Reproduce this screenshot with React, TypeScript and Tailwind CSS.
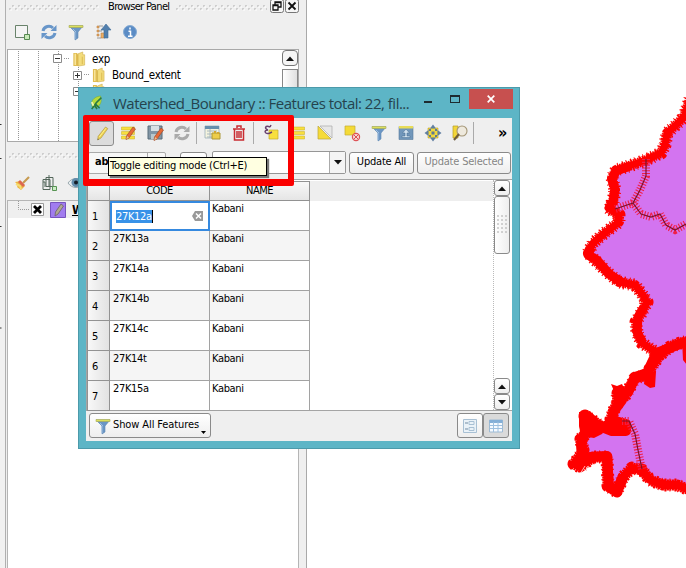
import type { ReactNode } from 'react';

const Icon = ({ children, className = '' }: { children: ReactNode; className?: string }) => (
  <svg viewBox="0 0 18 18" className={'h-[18px] w-[18px] shrink-0 ' + className} fill="none">{children}</svg>
);

const Funnel = () => (
  <Icon>
    <path d="M2 3h14l-5 6v6l-3 2V9z" fill="#6b96c5" stroke="#5c86b2" strokeWidth=".6" />
    <path d="M8 9v7M6 6l3 3" stroke="#9fc0e2" />
    <path d="M2 2.5h14v2H2z" fill="#dce05c" stroke="#a5a755" strokeWidth=".6" />
  </Icon>
);
const Pencil = () => (
  <>
    <path d="M12.5 3l2.3 1.6L8 14l-3.3 2 .5-3.8z" fill="#ecd04d" stroke="#b39c4a" strokeWidth=".7" />
    <path d="M13 4.2L6.4 13" stroke="#fff08c" /><path d="M4.5 16l1.4-.7-1-.8z" fill="#555" />
  </>
);
const RedPencil = () => (
  <><path d="M14 3l2.5 2-6.5 9-3 1.5.5-3.5z" fill="#e86a37" stroke="#9f4c2c" strokeWidth=".7" /><path d="M8 12l2 1.6-2.6 1.6z" fill="#e8c496" /></>
);
const Lines = () => (
  <g stroke="#c7ad27" strokeWidth=".5" fill="#f8df3e"><path d="M2.5 3h13v3h-13zM2.5 7.5h13v3h-13zM2.5 12h13v3h-13z" /></g>
);
const Refresh = ({ color }: { color: string }) => (
  <g stroke={color} strokeWidth="3">
    <path d="M3 8c1-5 7-6 10-3" /><path d="M15 10c-1 5-7 6-10 3" />
    <path d="M10.5 8H16.5V2zM7.5 10H1.5v6z" fill={color} stroke="none" />
  </g>
);
const Folder = ({ small = false }: { small?: boolean }) => (
  <svg viewBox="0 0 14 17" className={small ? 'h-4 w-[13px]' : 'h-4 w-3.5'}>
    <path d="M1 2h4l1 2h1v12H1z" fill="#e1bd52" /><path d="M6 3l5-2v3h2v11l-7 1z" fill="#f3dc7b" stroke="#cdab46" strokeWidth=".6" /><path d="M3 3v12" stroke="#fae9a0" strokeWidth="1.5" /><path d="M10.5 6v8" stroke="#d9b850" />
  </svg>
);
const Arrow = ({ down = false }: { down?: boolean }) => (
  <svg viewBox="0 0 8 5" className="h-[5px] w-2"><path d={down ? 'M0 0h8L4 4.5z' : 'M0 5h8L4 .5z'} fill="#111" /></svg>
);
const Plus = ({ open = false }: { open?: boolean }) => (
  <svg viewBox="0 0 9 9" className="h-[9px] w-[9px] shrink-0"><path d="M.5.5h8v8h-8z" fill="#fff" stroke="#8b8b8b" /><path d={open ? 'M2 4.5h5' : 'M2 4.5h5M4.5 2v5'} stroke="#333" /></svg>
);
const Grip = ({ width }: { width: number }) => (
  <svg width={width} height="6" className="shrink-0">
    <defs><pattern id={'grip' + width} width="6" height="6" patternUnits="userSpaceOnUse"><path d="M0 4h2M3 1h2" stroke="#c4c4c4" strokeWidth="1.4" /><path d="M1 5h2M4 2h2" stroke="#fff" /></pattern></defs>
    <rect width={width} height="6" fill={'url(#grip' + width + ')'} />
  </svg>
);
const Sep = () => <div className="h-[22px] w-px shrink-0 bg-[#aaa]" />;

const AddLayer = () => <Icon><path d="M2.5 2.5h12v12h-12z" stroke="#69836b" fill="#f4f4f4" /><path d="M11.5 11.5h5v5h-5z" fill="#c8eab9" stroke="#568951" /></Icon>;

function BrowserPanel() {
  return (
    <section className="flex h-[142px] flex-col pl-px">
      <div className="flex h-[15px] items-center">
        <div className="ml-[2px] w-[99px]"><Grip width={90} /></div>
        <span className="w-[68px] text-[11px] tracking-[-0.65px] whitespace-nowrap">Browser Panel</span>
        <Grip width={91} />
        <div className="ml-[3px] flex gap-[1px] pb-[3px]">
          <svg viewBox="0 0 14 14" className="h-3.5 w-3.5"><rect x=".5" y=".5" width="13" height="13" rx="2" fill="#f6f6f6" stroke="#777" /><path d="M5 6V3h6v5H8M3 6h5v5H3zM5 3.5h6M3 6.5h5" fill="none" stroke="#111" strokeWidth="1.3" /></svg>
          <svg viewBox="0 0 14 14" className="h-3.5 w-3.5"><rect x=".5" y=".5" width="13" height="13" rx="2" fill="#f6f6f6" stroke="#777" /><path d="M3.5 3.5l7 7m0-7l-7 7" stroke="#111" strokeWidth="1.8" /></svg>
        </div>
      </div>
      <div className="flex h-[34px] items-center gap-[9px] pl-[6px]">
        <AddLayer />
        <Icon><Refresh color="#6896c9" /></Icon>
        <Funnel />
        <Icon><path d="M3 3h2v2H3zM3 7h2v2H3zM3 11h2v2H3zM7 10h4v5H7z" fill="#edae63" stroke="#b98047" strokeWidth=".6" /><path d="M5 3h4M5 8h3M3 15h4" stroke="#999" /><path d="M12 1l5 6h-3v8h-4V7H7z" fill="#527fad" stroke="#3e6c98" strokeWidth=".6" /></Icon>
        <Icon><circle cx="9" cy="9" r="6.5" fill="#5b8cc5" stroke="#87acd4" strokeWidth="1" /><path d="M9 4.5v2M7.5 8.2H9.5V13M7 13.2h4.5" stroke="#fff" strokeWidth="1.5" /></Icon>
      </div>
      <div className="relative h-[93px] w-[292px] border border-[#a9a9a9] bg-white text-[11.5px] tracking-[-0.25px]">
        <svg className="absolute inset-0 h-full w-full" fill="none"><path d="M10.5 1v92M30.5 1v92M50.5 1v3M50.5 12v80M70.5 15v40M56 8.5h6M76 24.5h6" stroke="#969696" strokeDasharray="1 1" /></svg>
        <div className="relative flex h-[17px] items-center pl-[45px]"><Plus open /><div className="ml-[10px]"><Folder /></div><span className="ml-[6px] pt-[2px]">exp</span></div>
        <div className="relative flex h-[16px] items-center pl-[65px]"><Plus /><div className="ml-[10px]"><Folder small /></div><span className="ml-[7px] pt-[2px]">Bound_extent</span></div>
        <div className="relative flex h-[16px] items-center pl-[65px]"><Plus open /><div className="ml-[10px]"><Folder small /></div></div>
        <div className="absolute top-0 right-0 flex h-[91px] w-4 flex-col gap-[3px]">
          <div className="flex h-4 shrink-0 items-center justify-center rounded-sm border border-[#777] bg-[#f5f5f5]"><Arrow /></div>
          <div className="flex-1 border border-[#888] bg-gradient-to-r from-white to-[#e0e0e0]" />
        </div>
      </div>
    </section>
  );
}

function LayersPanel() {
  return (
    <section className="flex min-h-0 flex-1 flex-col pl-px">
      <div className="flex h-[27px] items-center pl-[2px]"><Grip width={290} /></div>
      <div className="flex h-[31px] items-center gap-[9px] pb-[3px] pl-[6px]">
        <Icon><path d="M16 3L10 9" stroke="#c79b51" strokeWidth="2.2" /><path d="M2 8l6-1 4 5-4 4-4-3 1-2z" fill="#edb640" /><path d="M7 6l5 5-2 2-5-5z" fill="#dc6750" /><path d="M3 10l4 2 1 3" stroke="#f6dc74" strokeWidth="2" /></Icon>
        <Icon><path d="M3 5.5h7v10H3zM6 3.5h7v9H6zM9 1v12M3 8h2v5" stroke="#53665a" /><path d="M12.5 12.5h4v4h-4z" fill="#ccebc6" stroke="#579453" /></Icon>
        <Icon><path d="M1 9c4-6 12-6 16 0-4 6-12 6-16 0z" fill="#e9eef0" stroke="#9aa9ae" /><circle cx="9" cy="8.5" r="4.5" fill="#648dac" /><circle cx="9" cy="8.5" r="2" fill="#151e27" /></Icon>
      </div>
      <div className="w-[292px] flex-1 border-x border-t border-[#b5b5b5] bg-white">
        <div className="flex h-[17px] items-center bg-[#efefef]">
          <svg className="h-full w-[23px] shrink-0" fill="none"><path d="M10.5 0v8.5H22" stroke="#999" strokeDasharray="1 1" /></svg>
          <svg className="h-[13px] w-[13px]" viewBox="0 0 13 13"><path d="M.5.5h12v12H.5z" fill="#fff" stroke="#999" /><path d="M3 3l7 7m0-7l-7 7" stroke="#000" strokeWidth="2.8" /></svg>
          <svg className="ml-[6px] h-4 w-4" viewBox="0 0 16 16"><path d="M.5.5h15v15H.5z" fill="#a17cef" stroke="#7754bd" /><path d="M11 2l2.5 2L8 12l-3 2 .5-4z" fill="#b1a990" stroke="#776d78" /></svg>
          <span className="ml-[6px] text-[12px] font-bold underline">Watershed</span>
        </div>
      </div>
    </section>
  );
}

function MapCanvas() {
  const upper = 'M690 99L684 117L675 126L667 133L665 145L661 153L646 160L629 166L616 170L612 178L615 190L613 202L608 208L619 215L619 222L606 232L593 243L588 253L597 262L607 272L619 282L635 285L642 294L647 302L642 312L636 322L637 333L642 343L657 353';
  const lower = 'M690 341L680 343L670 347L659 356L650 369L648 375L635 378L629 389L623 399L617 393L618 402L613 412L611 419L620 426L602 427L592 420L585 416L587 433L580 439L584 450L574 464L580 467L593 457L607 457L608 486L617 492L623 477L632 468L642 470L650 480L663 485L677 485L690 490';
  const seams = 'M646 159L646 176L640 190L633 203L615 209M633 203L641 214L651 217L660 214L666 225L675 230L686 224M622 421L629 421L635 434L638 450L642 469';
  return (
    <main className="min-w-0 flex-1 bg-white">
      <svg className="h-full w-full" viewBox="307 0 379 568" fill="none">
        <path d={upper + 'L700 345V90Z'} fill="#d374f0" /><path d={lower + 'L700 490V341Z'} fill="#d374f0" />
        <g stroke="#f00" strokeLinejoin="round">
          <path d={upper} strokeWidth="7" /><path d={upper} strokeWidth="10" strokeDasharray="1.6 .8" /><path d={upper} strokeWidth="13" strokeDasharray="1 2.7 1.4 3.9" />
          <path d={lower} strokeWidth="8" /><path d={lower} strokeWidth="11" strokeDasharray="2 .5" /><path d={lower} strokeWidth="13" strokeDasharray="2 3 1 4" />
          <path d="M630 166l-14 5-4 9 3 9-2 13-4 6M590 248l-2 7 9 5 12 14 14 9M644 307l-6 10-1 15 5 10" strokeWidth="9" />
          <path d="M657 353L677 345L690 341M656 354L647 373L635 377L627 394M619 387l3 13-8 11-2 9 14 4v7h-14l-25-10-2 11-4 13 1 12 8 4M576 465l14-8 17-1 2 31 8 5 6-16" strokeWidth="10" />
        </g>
        <path d="M579 412l11-1 10 10 5 4-3 9-8 4-13-2-2-10zM611 384l6 2 5-2 3 6-4 8-6-2-1-5zM645 372h11l-1 15-5 1-6-4zM682 340h5v25l-4-5z" fill="#f00" />
        <g stroke="#f01f48"><path d={seams} strokeWidth="8" strokeDasharray="1.1 1.7" /><path d={seams} stroke="#7a1226" strokeWidth="1.2" /></g>
        <path d="M580 474l5-8M583 475l5-9" stroke="white" strokeWidth=".7" />
      </svg>
    </main>
  );
}

function TitleBar() {
  return (
    <header className="flex h-[30px] shrink-0 items-center pl-[2px]">
      <Icon className="scale-[.88]"><path d="M13 1C5 2 1 7 4 14c6 1 12-4 9-13z" fill="#b7db3c" stroke="#79ab2e" strokeWidth=".6" /><path d="M3 16c3-5 5-8 11-13M7 10l5 5M6 11l3 5" stroke="#287944" strokeWidth="1.8" /><path d="M5 12L3 8" stroke="#f2f7b0" strokeWidth="2" /></Icon>
      <h1 className="ml-[7px] w-[311px] shrink-0 whitespace-nowrap font-['Open_Sans','Noto_Sans',sans-serif] text-[15px] leading-none tracking-[-0.5px] text-[#25434d]">Watershed_Boundary :: Features total: 22, fil...</h1>
      <div className="h-[2px] w-[8px] shrink-0 translate-y-[-1px] bg-[#1d2b30]" />
      <div className="ml-[18px] h-[8px] w-[10px] shrink-0 translate-y-[-4px] border border-t-2 border-[#1d2b30]" />
      <button className="ml-[9px] flex h-[20px] w-[44px] shrink-0 -translate-y-[4px] items-center justify-center bg-[#c7504f]"><svg className="h-2 w-2" viewBox="0 0 8 8"><path d="M.7.7l6.6 6.6m0-6.6L.7 7.3" stroke="#fff" strokeWidth="1.7" /></svg></button>
    </header>
  );
}

function EditToolbar() {
  return (
    <div className="flex h-[30px] shrink-0 items-center pl-[3px]">
      <button className="mr-[5px] flex h-[25px] w-[25px] shrink-0 items-center justify-center rounded-[3px] border border-[#8d8d8d] bg-[#dcdcdc]"><Icon><Pencil /></Icon></button>
      <div className="flex w-[77px] gap-[9px]">
        <Icon><Lines /><RedPencil /></Icon>
        <Icon><path d="M2 2h14v13H2z" fill="#8195a5" stroke="#596d7b" /><path d="M5 2h8v5H5z" fill="#d8e0e5" /><path d="M5 10h7v5H5z" fill="#b8c7cd" /><g transform="translate(1 1)"><RedPencil /></g></Icon>
        <Icon><Refresh color="#aaa" /></Icon>
      </div>
      <Sep />
      <div className="ml-[6px] flex w-[50px] gap-[9px]">
        <Icon><path d="M2 2h14v12H2z" fill="#f4f3df" stroke="#91a6b2" strokeWidth=".7" /><path d="M2 2h14v3H2z" fill="#668fad" /><path d="M4 7h10M4 10h7M4 13h7M7 5v9" stroke="#a8b8c0" /><path d="M9 9h8v6H9z" fill="#edcd4a" stroke="#ac9737" /><path d="M12 7v2M15 8v2" stroke="#d3a831" strokeWidth="2" /></Icon>
        <Icon><path d="M3 5h12M7 4V2h4v2M4.5 5v11h9V5M7 7v7M9 7v7M11 7v7" stroke="#c92c32" strokeWidth="1.5" /></Icon>
      </div>
      <Sep />
      <div className="ml-[8px] flex w-[211px] gap-[9px]">
        <Icon><path d="M7 6h9v9H7z" fill="#f8df3e" stroke="#c6ad2c" strokeWidth=".7" /><path d="M8 3C3 1 2 5 6 6 1 6 3 11 8 9M8 3l1-2M8 9l2-1" stroke="#69416e" strokeWidth="1.5" /></Icon>
        <Icon><Lines /></Icon>
        <Icon><path d="M2 2v13h13z" fill="#f5db39" stroke="#bca83b" strokeWidth=".7" /><path d="M4 2h12v12z" fill="#e7e7e7" stroke="#aaa" strokeWidth=".7" /></Icon>
        <Icon><path d="M2 2h10v9H2z" fill="#f4da37" stroke="#c3ad35" strokeWidth=".7" /><circle cx="13" cy="13" r="3.6" fill="#f8d5d1" stroke="#dd5357" strokeWidth="1.2" /><path d="M10.5 15.5l5-5M11 11l4 4" stroke="#d85256" /></Icon>
        <Funnel />
        <Icon><path d="M2 2.5h14v13H2z" fill="#7197bb" stroke="#577b9b" strokeWidth=".6" /><path d="M2 2h14v2.5H2z" fill="#e8dc57" /><path d="M9 5L5.5 9H8v3H5v1.6h8V12h-3V9h2.5z" fill="#d0e1ee" stroke="#41698d" strokeWidth=".5" /></Icon>
        <Icon><path d="M4 4h10v10H4z" fill="#f1d83c" stroke="#b5a034" strokeWidth=".6" /><path d="M9 .5l3 4H6zM9 17.5l3-4H6zM.5 9l4-3v6zM17.5 9l-4-3v6z" fill="#607fa1" /><path d="M7.5 7.5h3v3h-3zM5 5h2v2H5zM11 5h2v2h-2zM5 11h2v2H5zM11 11h2v2h-2z" fill="#617993" /></Icon>
        <Icon><path d="M2 2h5v12H2z" fill="#f3d638" stroke="#b49d28" strokeWidth=".7" /><circle cx="11" cy="7" r="5" fill="#eee9dd" stroke="#a49676" strokeWidth="1.1" /><path d="M8 10l-5 6" stroke="#6e5c3b" strokeWidth="2" /></Icon>
      </div>
      <Sep /><span className="ml-[24px] text-[16px] font-bold leading-none">»</span>
    </div>
  );
}

const btn = 'flex shrink-0 items-center justify-center rounded-[3px] border border-[#8a8a8a] bg-gradient-to-b from-white to-[#eeeeee]';

function FieldBar() {
  return (
    <div className="flex h-[31px] shrink-0 items-center pb-[2px] pl-[2px] text-[11px] tracking-[-0.2px]">
      <div className="flex h-[22px] w-[78px] items-center rounded-[2px] border border-[#aaa] bg-[#f7f7f7] pl-[6px] font-bold"><span>abc</span><span className="ml-auto flex h-full w-[18px] items-center justify-center border-l border-[#aaa]"><Arrow down /></span></div>
      <button className={btn + ' ml-[14px] h-[22px] w-[27px]'}>ε</button>
      <div className="ml-[5px] flex h-[23px] w-[134px] rounded-[2px] border border-[#969696] bg-white"><span className="ml-auto flex w-[16px] items-center justify-center border-l border-[#aaa] bg-[#f4f4f4]"><Arrow down /></span></div>
      <button className={btn + ' ml-[3px] h-[22px] w-[65px]'}>Update All</button>
      <button className={btn + ' ml-[3px] h-[22px] w-[94px] text-[#858585]'}>Update Selected</button>
    </div>
  );
}

const codes = ['27K12a', '27K13a', '27K14a', '27K14b', '27K14c', '27K14t', '27K15a'];
function AttributeTable() {
  return (
    <div className="flex h-[232px] shrink-0 border-t border-l border-b border-[#a5a5a5] bg-white text-[11px] tracking-[-0.35px]">
      <div className="min-w-0 flex-1 pt-px">
        <div className="flex h-[20px] bg-[#eeeeee] text-[11px] tracking-[-0.5px]">
          <div className="w-[23px] border border-[#929292] bg-gradient-to-b from-[#f8f8f8] to-[#e5e5e5]" />
          <div className="flex w-[100px] items-center justify-center border-y border-r border-[#929292] bg-gradient-to-b from-[#f8f8f8] to-[#e5e5e5] pt-px">CODE</div>
          <div className="flex w-[100px] items-center justify-center border-y border-r border-[#929292] bg-gradient-to-b from-[#f8f8f8] to-[#e5e5e5] pt-px">NAME</div>
        </div>
        {codes.map((code, i) => (
          <div key={code} className="flex h-[30px]">
            <div className="flex w-[23px] items-center border-x border-b border-[#929292] bg-gradient-to-r from-[#f8f8f8] to-[#e2e2e2] pt-[3px] pl-[4px]">{i + 1}</div>
            {i === 0
              ? <div className="flex w-[100px] items-center border-2 border-[#3589df] bg-white pl-[4px]"><span className="border-r border-black bg-[#3892e8] leading-[13px] text-white">{code}</span><svg className="ml-auto mr-[5px] h-[10px] w-[11px]" viewBox="0 0 11 10"><path d="M3 0h8v10H3L0 5z" fill="#999" /><path d="M4 2.5l5 5m0-5l-5 5" stroke="#fff" strokeWidth="1.5" /></svg></div>
              : <div className={'w-[100px] border-r border-b border-[#a2a2a2] pl-[3px] ' + (i % 2 ? 'bg-[#f5f5f5]' : 'bg-white')}>{code}</div>}
            <div className={'w-[100px] border-r border-b border-[#a2a2a2] pl-[2px] ' + (i % 2 ? 'bg-[#f5f5f5]' : 'bg-white')}>Kabani</div>
          </div>
        ))}
      </div>
      <div className="mr-[2px] flex w-[17px] flex-col border-l border-dotted border-[#bbb]">
        <div className={btn + ' h-[16px]'}><Arrow /></div>
        <div className={btn + ' h-[58px] bg-gradient-to-r to-[#dfdfdf]'}><svg className="h-[20px] w-[11px]">{[1, 5, 9, 13, 17].map(y => <path key={y} d={`M0 ${y}h2M4 ${y}h2M8 ${y}h2`} stroke="#aaa" />)}</svg></div>
        <div className="flex-1" />
        <div className={btn + ' h-[16px]'}><Arrow /></div><div className={btn + ' h-[16px]'}><Arrow down /></div>
      </div>
    </div>
  );
}

function AttributeDialog() {
  return (
    <section className="absolute top-[87px] left-[78px] flex h-[362px] w-[442px] flex-col border border-[#4c9aaa] bg-[#5db5c6] px-[7px] pb-[7px]">
      <TitleBar />
      <div className="flex min-h-0 flex-1 flex-col bg-[#efefef]">
        <EditToolbar /><FieldBar /><AttributeTable />
        <footer className="flex flex-1 items-start pt-[2px] pl-[3px]">
          <button className={btn + ' h-[25px] w-[122px] text-[11px] tracking-[-0.1px]'}><Funnel /><span className="ml-px whitespace-nowrap">Show All Features</span><svg className="mt-[14px] ml-[2px] h-[3px] w-[5px]"><path d="M0 0h5L2.5 3z" fill="#000" /></svg></button>
          <button className={btn + ' ml-auto h-[25px] w-[26px]'}><Icon><g stroke="#a8c0d4"><path d="M2.5 2.5h13v13h-13zM8 4.5h5v3H8zM8 10.5h5v3H8z" fill="#eaf2f8" /><path d="M4 6h3M4 12h3" stroke="#718ba3" /></g></Icon></button>
          <button className="mr-[3px] flex h-[25px] w-[26px] shrink-0 items-center justify-center rounded-[3px] border border-[#8a8a8a] bg-[#dadada]"><Icon><path d="M2.5 3h13v12h-13z" fill="#f6faff" stroke="#9ebbd4" /><path d="M2.5 3h13v3h-13z" fill="#84afd7" /><path d="M3 8.5h12M3 11.5h12M6.5 5v10M11 5v10" stroke="#9ec0df" /></Icon></button>
        </footer>
      </div>
    </section>
  );
}

export default function App() {
  return (
    <div className="relative flex h-[568px] w-[686px] overflow-hidden bg-[#efefef] font-['DejaVu_Sans_Condensed','DejaVu_Sans',sans-serif] text-black">
      <aside className="flex w-[307px] shrink-0 border-r border-[#a9a9a9]">
        <div className="w-[6px] shrink-0 border-r border-[#b0b0b0] bg-[#f1f1f1]"><svg className="h-full w-[4px]"><path d="M0 124.5h1.5M0 158.5h1.5M0 226.5h1.5M0 328h1.5" stroke="#333" /></svg></div>
        <div className="flex min-w-0 flex-1 flex-col"><BrowserPanel /><LayersPanel /></div>
      </aside>
      <MapCanvas />
      <AttributeDialog />
      <div className="absolute top-[115px] left-[83px] h-[71px] w-[211px] rounded-[2px] border-[6px] border-b-[7px] border-[#fb0000]" />
      <div className="absolute top-[157px] left-[108px] flex h-[19px] w-[159px] items-center border border-black bg-[#ffffe1] pl-px text-[11px] tracking-[-0.22px] whitespace-nowrap shadow-[2px_2px_1px_#777]">Toggle editing mode (Ctrl+E)</div>
    </div>
  );
}
